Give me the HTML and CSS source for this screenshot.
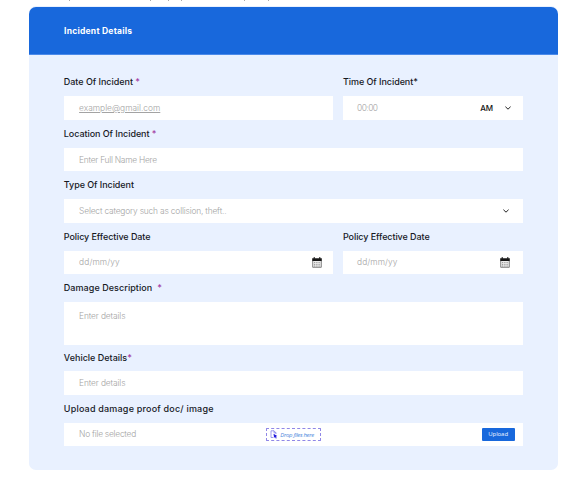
FILE: index.html
```
<!DOCTYPE html>
<html lang="en">
<head>
<meta charset="utf-8">
<title>Incident Details</title>
<link rel="stylesheet" href="styles.css">
</head>
<body>
<svg class="intro-edge" viewBox="0 0 581 1" fill="#aaa"><path d="M69 0h1v1h-1zM150 0h1v1h-1zM168 0h1v1h-1zM181 0h1v1h-1zM244 0h1v1h-1zM268 0h1v1h-1z"/></svg>
<main class="card">
  <header class="card-header"><h1>Incident Details</h1></header>
  <form class="form">
    <div class="row split">
      <div class="field"><label class="l-date">Date Of Incident <b>*</b></label><div class="control"><span class="hint link">example@gmail.com</span></div></div>
      <div class="field"><label class="l-time">Time Of Incident*</label><div class="control side"><span class="hint time">00:00</span><span class="am">AM</span><svg class="chevron" viewBox="0 0 8 6"><path d="M1.4 1.7 4 4.2l2.6-2.5"/></svg></div></div>
    </div>
    <div class="field"><label class="l-location">Location Of Incident <b>*</b></label><div class="control"><span class="hint name">Enter Full Name Here</span></div></div>
    <div class="field"><label class="l-type">Type Of Incident</label><div class="control"><span class="hint category">Select category such as collision, theft..</span><svg class="chevron end" viewBox="0 0 8 6"><path d="M1.4 1.7 4 4.2l2.6-2.5"/></svg></div></div>
    <div class="row split">
      <div class="field"><label class="l-policy">Policy Effective Date</label><div class="control"><span class="hint day">dd/mm/yy</span><svg class="calendar first" viewBox="0 0 10 11"><path d="M.2 1.2h1.5V0h1v1.2h4.6V0h1v1.2h1.5V4H.2z" fill="#171717"/><path d="M.7 4v6.3h8.6V4" fill="#eee" stroke="#666" stroke-width=".8"/><path d="M2.2 5.6h6M2.2 7.4h6M2.2 9h6" stroke="#777" stroke-width=".9" stroke-dasharray="1 1.2"/></svg></div></div>
      <div class="field"><label class="l-policy">Policy Effective Date</label><div class="control side"><span class="hint day">dd/mm/yy</span><svg class="calendar" viewBox="0 0 10 11"><path d="M.2 1.2h1.5V0h1v1.2h4.6V0h1v1.2h1.5V4H.2z" fill="#171717"/><path d="M.7 4v6.3h8.6V4" fill="#eee" stroke="#666" stroke-width=".8"/><path d="M2.2 5.6h6M2.2 7.4h6M2.2 9h6" stroke="#777" stroke-width=".9" stroke-dasharray="1 1.2"/></svg></div></div>
    </div>
    <div class="field"><label class="l-damage">Damage Description&nbsp; <b>*</b></label><div class="control tall"><span class="hint details">Enter details</span></div></div>
    <div class="field vehicle"><label class="l-vehicle">Vehicle Details<b>*</b></label><div class="control"><span class="hint details">Enter details</span></div></div>
    <div class="field"><label class="l-upload">Upload damage proof doc/ image</label><div class="control"><span class="hint file">No file selected</span>
      <div class="drop"><svg viewBox="0 0 8 9"><path d="M3.5 7.5H1V.8h3l2 2V4M4 .8v2h2" fill="none" stroke="#7774e8" stroke-width=".7"/><path d="m3.5 3.7 3.8 2.4-1.3.5.7 1.6-.9.4-.7-1.7-1 .9z" fill="#2118dc"/></svg><span>Drop files here</span></div>
      <button type="button">Upload</button></div></div>
  </form>
</main>
</body>
</html>
```
FILE: styles.css
```
* { box-sizing: border-box; }
body { margin: 0; background: #fff; font-family: Inter, sans-serif; overflow: hidden; }
.intro-edge { display: block; width: 581px; height: 1px; }
.card { width: 529px; height: 463px; margin: 6px 0 0 29px; background: #e9f1ff; border-radius: 7px; overflow: hidden; box-shadow: 0 -1px 0 #e9f1ff; }
.card-header { height: 47.5px; padding: 1px 0 0 35px; display: flex; align-items: center; background: #1868dc; border-bottom: 1px solid #4b8aea; }
h1 { margin: 0; color: #fff; font-size: 8.5px; font-weight: 700; letter-spacing: .24px; }
.form { padding: 13.9px 34.7px 0 34.8px; }
.split { display: grid; grid-template-columns: 269.2px 180.2px; column-gap: 10px; }
label { display: flex; align-items: center; height: 27.8px; padding-bottom: 1px; color: #17191f; font-size: 9px; font-weight: 480; white-space: pre; }
label b { color: #a33ba3; font-weight: 500; }
.l-date { letter-spacing: -.03px; }
.l-time, .l-location, .l-type { letter-spacing: -.06px; }
.l-policy { letter-spacing: -.08px; }
.l-damage { letter-spacing: .06px; }
.l-upload { letter-spacing: .2px; }
.control { position: relative; display: flex; align-items: center; height: 23.7px; padding-left: 15.3px; background: #fff; }
.tall { height: 42.6px; align-items: flex-start; padding-top: 9px; }
.vehicle label { height: 26.3px; }
.side { padding-left: 14px; }
.hint { color: #a3a3a3; font-size: 8.4px; font-weight: 300; white-space: nowrap; }
.link { text-decoration: underline; text-underline-offset: 1px; text-decoration-thickness: 1px; }
.time { letter-spacing: -.5px; }
.name { letter-spacing: -.25px; }
.category { letter-spacing: -.17px; }
.day { letter-spacing: .1px; }
.details { letter-spacing: -.12px; }
.file { letter-spacing: -.24px; }
.am { margin-left: auto; color: #111; font-size: 8px; font-weight: 500; }
.chevron { width: 8px; height: 6px; margin: 0 11px 0 11px; fill: none; stroke: #222; stroke-width: 1; }
.end { margin-left: auto; margin-right: 13.5px; }
.calendar { width: 10px; height: 11px; margin-left: auto; margin-right: 12.7px; }
.first { margin-right: 10.6px; }
.drop { position: absolute; left: 202px; top: 5.5px; width: 55px; height: 13px; display: flex; align-items: center; padding-left: 3px; border: 1px dashed #9087e7; border-radius: 1px; color: #4d87dc; font: italic 400 6px "Open Sans", sans-serif; letter-spacing: -.33px; white-space: nowrap; }
.drop svg { width: 8px; height: 9px; margin-right: 2.5px; }
button { width: 33px; height: 13px; margin: 0 8.7px 0 auto; padding: 0; border: 0; border-radius: 1px; background: #1868dc; color: #e2edff; font: 6px "Noto Sans", sans-serif; letter-spacing: -.1px; }
```
